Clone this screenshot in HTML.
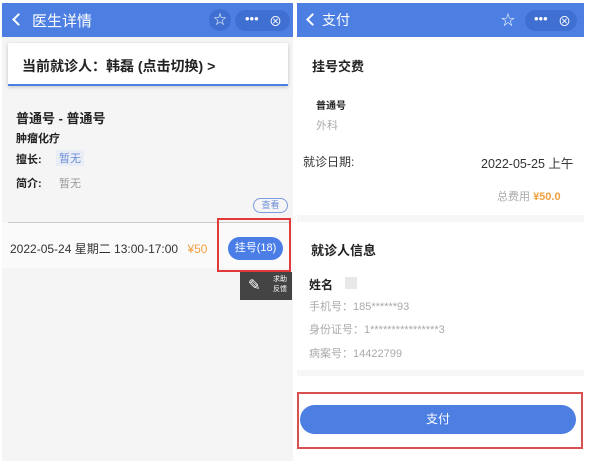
<!DOCTYPE html><html><head><meta charset="utf-8"><style>
*{margin:0;padding:0;box-sizing:border-box}
body{width:600px;height:461px;background:#fff;position:relative;overflow:hidden;font-family:"Liberation Sans","Noto Sans CJK SC",sans-serif;color:#222}
.a{position:absolute;white-space:nowrap}
.hd{position:absolute;top:3px;height:34px;background:#4d7fe3;color:#fff}
.pill{position:absolute;top:7px;width:52px;height:21px;border-radius:11px;background:#3f6fd0}
.chev{position:absolute;top:12px;width:9px;height:9px;border-left:2px solid #fff;border-bottom:2px solid #fff;transform:rotate(45deg)}
.b{font-weight:bold}
.g{color:#999}
</style></head><body>
<div class="a" style="left:2px;top:37px;width:291px;height:424px;background:#f5f5f5"></div>
<div class="hd" style="left:2px;width:291px">
 <div class="chev" style="left:12px"></div>
 <div class="a" style="left:30px;top:7px;font-size:15px">医生详情</div>
 <div class="a" style="left:207px;top:6px;width:22px;height:22px;border-radius:11px;background:#3f6fd0;text-align:center;font-size:13px;line-height:22px">☆</div>
 <div class="pill" style="left:233px;width:55px"><span class="a" style="left:10px;top:1px;font-size:13px">•••</span><span class="a" style="left:34px;top:1px;font-size:13px">⊗</span></div>
</div>
<div class="a" style="left:8px;top:43px;width:280px;height:43px;background:#fff;box-shadow:0 1px 4px rgba(0,0,0,.2);border-bottom:2px solid #4d7fe3"></div>
<div class="a b" style="left:22px;top:56px;font-size:14px">当前就诊人：韩磊 (点击切换) &gt;</div>
<div class="a b" style="left:16px;top:108px;font-size:13px">普通号 - 普通号</div>
<div class="a b" style="left:16px;top:130px;font-size:11px">肿瘤化疗</div>
<div class="a b" style="left:16px;top:151px;font-size:11px">擅长:</div>
<div class="a" style="left:56px;top:150px;font-size:11px;color:#6d8fd6;background:#e9edf5;padding:0 3px">暂无</div>
<div class="a b" style="left:16px;top:175px;font-size:11px">简介:</div>
<div class="a g" style="left:59px;top:175px;font-size:11px">暂无</div>
<div class="a" style="left:253px;top:198px;width:35px;height:15px;border:1px solid #7a9be0;border-radius:8px;font-size:9px;color:#6d8fd6;text-align:center;line-height:13px">查看</div>
<div class="a" style="left:8px;top:222px;width:282px;height:1px;background:#ccc"></div>
<div class="a" style="left:2px;top:223px;width:291px;height:45px;background:#fafafa"></div>
<div class="a" style="left:10px;top:240px;font-size:12px;color:#333">2022-05-24 星期二 13:00-17:00 <span style="color:#f0a040;margin-left:6px">¥50</span></div>
<div class="a" style="left:228px;top:237px;width:55px;height:23px;border-radius:12px;background:#4a7ee6;color:#fff;font-size:11px;text-align:center;line-height:23px">挂号(18)</div>
<div class="a" style="left:217px;top:218px;width:74px;height:54px;border:2px solid #e23a3a"></div>
<div class="a" style="left:240px;top:272px;width:52px;height:28px;background:#444"></div>
<div class="a" style="left:248px;top:276px;color:#fff;font-size:15px">✎</div>
<div class="a" style="left:273px;top:275px;color:#fff;font-size:7px;line-height:10px">求助<br>反馈</div>

<div class="hd" style="left:297px;width:287px">
 <div class="chev" style="left:11px"></div>
 <div class="a" style="left:25px;top:7px;font-size:14px">支付</div>
 <div class="a" style="left:204px;top:7px;font-size:14px">☆</div>
 <div class="pill" style="left:228px;width:52px"><span class="a" style="left:9px;top:1px;font-size:13px">•••</span><span class="a" style="left:33px;top:1px;font-size:13px">⊗</span></div>
</div>
<div class="a b" style="left:312px;top:56px;font-size:13px">挂号交费</div>
<div class="a b" style="left:316px;top:97px;font-size:10px">普通号</div>
<div class="a g" style="left:316px;top:117px;font-size:11px;color:#aaa">外科</div>
<div class="a" style="left:303px;top:153px;font-size:12px;color:#333">就诊日期:</div>
<div class="a" style="left:481px;top:153px;font-size:12.5px;color:#333">2022-05-25 上午</div>
<div class="a" style="left:497px;top:188px;font-size:11px;color:#aaa">总费用 <b style="color:#f0a040">¥50.0</b></div>
<div class="a" style="left:297px;top:215px;width:287px;height:7px;background:#f6f6f6"></div>
<div class="a b" style="left:311px;top:240px;font-size:13px">就诊人信息</div>
<div class="a b" style="left:309px;top:276px;font-size:12px">姓名</div>
<div class="a" style="left:345px;top:277px;width:12px;height:12px;background:#e8e8e8"></div>
<div class="a" style="left:309px;top:298px;font-size:11px;color:#aaa">手机号：185******93</div>
<div class="a" style="left:309px;top:321px;font-size:11px;color:#aaa">身份证号：1****************3</div>
<div class="a" style="left:309px;top:345px;font-size:11px;color:#aaa">病案号：14422799</div>
<div class="a" style="left:297px;top:370px;width:287px;height:6px;background:#f6f6f6"></div>
<div class="a" style="left:297px;top:392px;width:286px;height:57px;border:2px solid #d85050"></div>
<div class="a" style="left:300px;top:405px;width:276px;height:29px;border-radius:15px;background:#4d7fe3;color:#fff;font-size:12px;text-align:center;line-height:29px">支付</div>
</body></html>
